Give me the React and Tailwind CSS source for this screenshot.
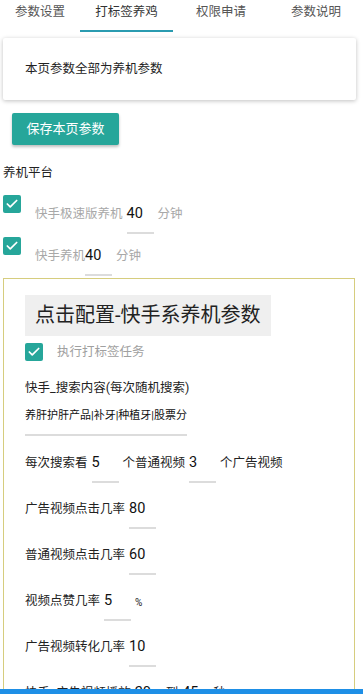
import { Check } from "lucide-react"

const FONT = { fontFamily: "Roboto, 'Noto Sans CJK SC', sans-serif" }

const TABS = [
  { label: "参数设置", w: "w-[80px]" },
  { label: "打标签养鸡", w: "w-[93px]", active: true },
  { label: "权限申请", w: "w-[96px]" },
  { label: "参数说明", w: "w-[94px]" },
]

function Box() {
  return (
    <span className="flex h-[18px] w-[18px] shrink-0 items-center justify-center rounded-[2px] bg-[#26a69a]">
      <Check size={14} strokeWidth={3} className="text-white" />
    </span>
  )
}

function Field({ value, tight }) {
  return (
    <span
      className={`${tight ? "mr-[4px]" : "mx-[4px]"} block h-[30px] w-[27px] shrink-0 border-b-2 border-[#dcdcdc] text-[14.5px] leading-[20px] text-[#111]`}
    >
      {value}
    </span>
  )
}

function Row({ label, value, unit, children }) {
  return (
    <div className="flex h-[46px] items-start text-[12.5px] leading-[20px] text-[#222]">
      <span>{label}</span>
      <Field value={value} />
      {unit && <span>{unit}</span>}
      {children}
    </div>
  )
}

function Platform({ label, value, tight, h }) {
  return (
    <div className={`flex ${h} items-start text-[12.5px] leading-[20px]`}>
      <Box />
      <div className="ml-[14px] mt-[9px] flex items-start">
        <span className="text-[#a8a8a8]">{label}</span>
        <Field value={value} tight={tight} />
        <span className="text-[#a8a8a8]">分钟</span>
      </div>
    </div>
  )
}

export default function App() {
  return (
    <div className="min-h-screen bg-white" style={FONT}>
      <div className="flex h-[33px]">
        {TABS.map((t) => (
          <div
            key={t.label}
            className={`${t.w} flex flex-col items-center ${t.active ? "text-[#333]" : "text-[#555]"}`}
          >
            <span className="mt-[3px] text-[12.5px] leading-[18px]">{t.label}</span>
            {t.active && <span className="mt-auto mb-[1px] h-[2px] w-full bg-[#2a9bb0]" />}
          </div>
        ))}
      </div>

      <div className="mx-[3px] mt-[5px] w-[353px] rounded-[2px] px-[22px] pt-[21px] pb-[21px] text-[12.5px] leading-[20px] text-[#222] shadow-[0_1px_4px_rgba(0,0,0,0.25)]">
        本页参数全部为养机参数
      </div>

      <button className="ml-[12px] mt-[13px] block h-[32px] w-[107px] rounded-[2px] bg-[#26a69a] text-[13px] text-white shadow-[0_2px_3px_rgba(0,0,0,0.25)]">
        保存本页参数
      </button>

      <div className="ml-[3px] mt-[18px] text-[12.5px] leading-[20px] text-[#222]">养机平台</div>

      <div className="ml-[3px] mt-[12px]">
        <Platform label="快手极速版养机" value="40" h="h-[42px]" />
        <Platform label="快手养机" value="40" tight h="h-[41px]" />
      </div>

      <div className="mx-[3px] w-[352px] border border-[#d6cd7e] px-[21px] pt-[16px] pb-[20px]">
        <div className="inline-block h-[41px] bg-[#efefef] px-[10px] text-[20px] leading-[41px] text-[#222]">
          点击配置-快手系养机参数
        </div>
        <div className="mt-[7px] flex h-[18px] items-center">
          <Box />
          <span className="ml-[14px] text-[12.5px] text-[#a0a0a0]">执行打标签任务</span>
        </div>
        <div className="mt-[17px] text-[12.5px] leading-[20px] text-[#222]">快手_搜索内容(每次随机搜索)</div>
        <div className="mt-[11px] h-[27px] w-[162px] overflow-hidden whitespace-nowrap border-b-2 border-[#dcdcdc] text-[11px] leading-[14px] text-[#111]">
          养肝护肝产品|补牙|种植牙|股票分析
        </div>
        <div className="mt-[17px]">
          <Row label="每次搜索看" value="5" unit="个普通视频">
            <Field value="3" />
            <span>个广告视频</span>
          </Row>
          <Row label="广告视频点击几率" value="80" />
          <Row label="普通视频点击几率" value="60" />
          <Row label="视频点赞几率" value="5">
            <span className="mt-[2px] text-[10px]">%</span>
          </Row>
          <Row label="广告视频转化几率" value="10" />
          <Row label="快手_广告视频播放" value="20" unit="到">
            <Field value="45" />
            <span>秒</span>
          </Row>
        </div>
      </div>

      <div className="fixed inset-x-0 bottom-0 h-[5px] bg-[#1e8fe6]" />
    </div>
  )
}
